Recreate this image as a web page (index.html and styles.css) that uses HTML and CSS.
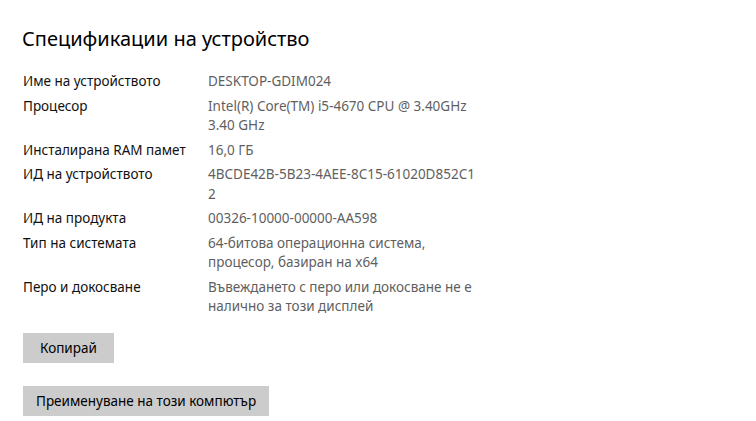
FILE: index.html
```html
<!doctype html>
<html lang="bg">
<head>
  <meta charset="utf-8" />
  <meta name="viewport" content="width=device-width,initial-scale=1" />
  <title>Спецификации на устройство</title>
  <link rel="stylesheet" href="styles.css">
</head>
<body>

<div class="page">
  <h1>Спецификации на устройство</h1>

  <div class="specs">
    <div class="row"><div class="label">Име на устройството</div><div class="value">DESKTOP-GDIM024</div></div>
    <div class="row"><div class="label">Процесор</div><div class="value">Intel(R) Core(TM) i5-4670 CPU @ 3.40GHz 3.40 GHz</div></div>
    <div class="row"><div class="label">Инсталирана RAM памет</div><div class="value">16,0 ГБ</div></div>
    <div class="row"><div class="label">ИД на устройството</div><div class="value break">4BCDE42B-5B23-4AEE-8C15-61020D852C12</div></div>
    <div class="row"><div class="label">ИД на продукта</div><div class="value">00326-10000-00000-AA598</div></div>
    <div class="row"><div class="label">Тип на системата</div><div class="value">64-битова операционна система, процесор, базиран на x64</div></div>
    <div class="row"><div class="label">Перо и докосване</div><div class="value">Въвеждането с перо или докосване не е налично за този дисплей</div></div>
  </div>

  <button class="btn">Копирай</button>
  <button class="btn">Преименуване на този компютър</button>
</div>

</body>
</html>
```

FILE: styles.css
```css
body{margin:0;background:#fff;color:#000;font-family:"Noto Sans","Open Sans",Arial,sans-serif;}
.page{padding:25px 0 0 23px;display:flex;flex-direction:column;align-items:flex-start;}
h1{margin:0 0 0 -1px;font-size:20px;font-weight:400;line-height:28px;color:#000;}
.specs{margin-top:19px;display:flex;flex-direction:column;gap:5px;}
.row{display:flex;font-size:13.5px;line-height:19.5px;}
.label{width:185px;flex:none;color:#111;}
.value{width:268px;color:#5f5f5f;}
.value.break{word-break:break-all;}
.btn{font-family:inherit;font-size:13.5px;background:#ccc;color:#000;border:none;height:30px;padding:0 17px;margin-top:16px;cursor:pointer;}
.btn + .btn{margin-top:23px;padding:0 13px;}
```
